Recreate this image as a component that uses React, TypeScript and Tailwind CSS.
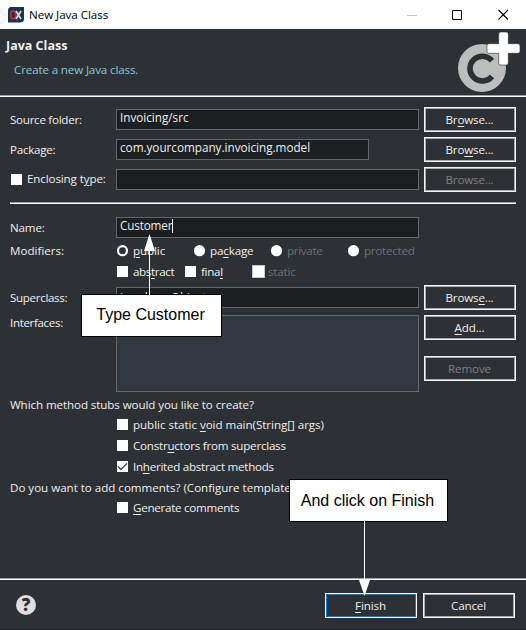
import React from 'react';

type Box = { className?: string; children?: React.ReactNode };

function Label({ className = '', children }: Box) {
  return <span className={`block whitespace-pre leading-[16px] ${className}`}>{children}</span>;
}

function Key({ children }: Box) {
  return <span className="underline decoration-1 underline-offset-2">{children}</span>;
}

function Field({ className = '', children }: Box) {
  return (
    <div className={`h-[21px] shrink-0 border border-[#656565] bg-[#1b1f22] pl-[3px] text-[11.7px] leading-[14px] whitespace-pre ${className}`}>
      {children}
    </div>
  );
}

function Button({ className = '', children }: Box) {
  return (
    <button className={`block h-[25px] w-[92px] shrink-0 border border-[#f4f4f4] bg-[#adadad] p-px tracking-[-0.15px] ${className}`}>
      <span className="flex h-full items-center justify-center bg-[#2d3135] pr-px whitespace-pre">
        <span className="leading-[16px]">{children}</span>
      </span>
    </button>
  );
}

function Check({ checked = false, children, className = '', text = '' }: Box & { checked?: boolean; text?: string }) {
  return (
    <div className={`flex h-[21px] items-center ${className}`}>
      <span className="block h-[11px] w-[11px] bg-white">
        {checked && (
          <svg viewBox="0 0 11 11" className="h-[11px] w-[11px]">
            <path d="M1 5.5 4 8.5 10 2.3" fill="none" stroke="#2d3135" strokeWidth="1.2" />
          </svg>
        )}
      </span>
      <Label className={`ml-[5px] ${text}`}>{children}</Label>
    </div>
  );
}

function Radio({ selected = false, children, className = '', text = '' }: Box & { selected?: boolean; text?: string }) {
  return (
    <div className={`flex h-[21px] items-center ${className}`}>
      <svg viewBox="0 0 12 12" className="h-[12px] w-[12px]">
        <circle cx="5.5" cy="5.7" r="5.6" fill="#fff" />
        {selected && <circle cx="5.5" cy="5.7" r="3.4" fill="#2d3135" />}
      </svg>
      <Label className={`ml-[4px] ${text}`}>{children}</Label>
    </div>
  );
}

function Rule({ className = '' }: Box) {
  return <div className={`h-[2px] shrink-0 border-t border-[#a0a0a0] bg-white ${className}`} />;
}

export default function App() {
  return (
    <div className="relative flex h-[630px] w-[526px] flex-col overflow-hidden bg-[#2d3135] font-['Open_Sans','Noto_Sans',sans-serif] text-[11.6px] text-[#eeeeee]">
      <div className="flex h-[29px] shrink-0 items-center bg-white text-black">
        <svg viewBox="0 0 16 16" className="ml-[8px] h-[16px] w-[16px]">
          <path d="M3 0H16V12Q16 15.5 12 15.5H0V4Q0 0 3 0Z" fill="#12394b" />
          <ellipse cx="5.3" cy="8" rx="2.6" ry="3.8" fill="none" stroke="#e01e35" strokeWidth="1.7" />
          <path d="M8 4 13 12M13 4 8 12" stroke="#d7dcdc" strokeWidth="1.7" />
        </svg>
        <Label className="ml-[5px] tracking-[-0.04px]">New Java Class</Label>
        <svg viewBox="0 0 110 12" className="ml-auto mr-[14px] h-[12px] w-[110px]">
          <path d="M5 6.5H15" stroke="#c6c6c6" />
          <path d="M50.5 1.5H59.5V10.5H50.5Z" fill="none" stroke="#000" />
          <path d="M96.5 1 106 10.5M106 1 96.5 10.5" stroke="#000" strokeWidth="1.1" />
        </svg>
      </div>

      <div className="flex h-[66px] shrink-0 justify-between">
        <div className="pl-[6px] pt-[9px]">
          <Label className="text-[12.5px] font-bold">Java Class</Label>
          <Label className="ml-[8px] mt-[8px] tracking-[-0.14px] text-[#8ac6d6]">Create a new Java class.</Label>
        </div>
        <svg viewBox="0 0 66 66" className="mr-[4px] h-[66px] w-[66px]">
          <circle cx="26" cy="39" r="24" fill="#bdbdbd" />
          <path d="M36 31.8A12.4 12.4 0 1 0 36 47.4" fill="none" stroke="#2d3135" strokeWidth="5.6" />
          <path
            d="M44.7 3h5.6q2 0 2 2v9.700h9.700q2 0 2 2v5.600q0 2-2 2h-9.700v9.700q0 2-2 2h-5.600q-2 0-2-2v-9.700h-9.700q-2 0-2-2v-5.600q0-2 2-2h9.700v-9.700q0-2 2-2Z"
            fill="#fff"
            stroke="#2d3135"
            strokeWidth=".6"
          />
        </svg>
      </div>
      <Rule />

      <div className="flex h-[105px] shrink-0 flex-col gap-[5px] pl-[10px] pt-[10px]">
        <div className="flex h-[25px] items-center">
          <Label className="w-[106px] tracking-[-0.27px]">Source folder:</Label>
          <Field className="w-[303px]">Invoicing/src</Field>
          <Button className="ml-[5px]">Br<Key>o</Key>wse...</Button>
        </div>
        <div className="flex h-[25px] items-center">
          <Label className="w-[106px] tracking-[-0.25px]">Package:</Label>
          <Field className="w-[253px]">com.yourcompany.invoicing.model</Field>
          <Button className="ml-[55px]">Bro<Key>w</Key>se...</Button>
        </div>
        <div className="flex h-[25px] items-center pb-px">
          <Check className="w-[106px] pl-px" text="tracking-[-0.12px] -ml-px">Enclosing t<Key>y</Key>pe:</Check>
          <Field className="mt-px w-[303px]" />
          <Button className="mt-px ml-[5px] text-[#7f7f7f]">Browse...</Button>
        </div>
      </div>
      <Rule className="mx-[10px]" />

      <div className="shrink-0 pl-[10px] pt-[13px]">
        <div className="flex h-[21px] items-center">
          <Label className="w-[106px] tracking-[-0.15px]">Name:</Label>
          <Field className="flex w-[303px] tracking-[-0.15px]">
            Customer<span className="mt-px h-[14px] w-px bg-white" />
          </Field>
        </div>
        <div className="mt-[2px] flex h-[21px] items-center">
          <Label className="w-[107px]">Modifiers:</Label>
          <Radio selected className="w-[77px]" text="tracking-[-0.1px]"><Key>p</Key>ublic</Radio>
          <Radio className="w-[77px]" text="tracking-[-0.14px]">pa<Key>c</Key>kage</Radio>
          <Radio className="w-[77px]" text="text-[#6e7072] tracking-[-0.3px]">private</Radio>
          <Radio text="text-[#6e7072] tracking-[-0.25px]">protected</Radio>
        </div>
        <div className="flex h-[21px] items-center pl-[107px]">
          <Check className="w-[68px]" text="-ml-px tracking-[-0.35px]">abs<Key>t</Key>ract</Check>
          <Check className="w-[67px]" text="tracking-[-0.3px]">fina<Key>l</Key></Check>
          <span className="h-[13px] w-[13px] border border-[#c8c8c8] bg-white" />
          <Label className="ml-[3px] tracking-[-0.2px] text-[#6e7072]">static</Label>
        </div>
        <div className="mt-[3px] flex h-[25px] items-center">
          <Label className="w-[106px] tracking-[-0.33px]">Superclass:</Label>
          <Field className="w-[303px] pt-[2px]">java.lang.Object</Field>
          <Button className="ml-[5px]">Brows<Key>e</Key>...</Button>
        </div>
        <div className="mt-[5px] flex h-[77px]">
          <Label className="w-[106px] tracking-[-0.35px]">Interfaces:</Label>
          <div className="w-[303px] border border-[#656565] bg-[#31383f]" />
          <div className="ml-[5px] flex flex-col gap-[16px]">
            <Button><Key>A</Key>dd...</Button>
            <Button className="text-[#7f7f7f]">Remove</Button>
          </div>
        </div>
        <Label className="mt-[5px] tracking-[-0.09px]">Which method stubs would you like to create?</Label>
        <div className="mt-px pl-[107px]">
          <Check text="-ml-px tracking-[-0.04px]">public static <Key>v</Key>oid main(String[] args)</Check>
          <Check text="-ml-px tracking-[-0.23px]">Constr<Key>u</Key>ctors from superclass</Check>
          <Check checked text="-ml-px tracking-[-0.26px]">In<Key>h</Key>erited abstract methods</Check>
        </div>
        <Label className="mt-[3px] tracking-[-0.02px]">Do you want to add comments? (Configure template</Label>
        <Check className="mt-px pl-[107px]" text="-ml-px tracking-[-0.26px]"><Key>G</Key>enerate comments</Check>
      </div>

      <div className="mt-auto h-[52px] shrink-0 border-b border-[#202326]">
        <Rule />
        <div className="flex pl-[16px] pt-[13px]">
          <span className="mt-[2px] flex h-[20px] w-[20px] items-center justify-center rounded-full bg-[#dedede] text-[17px] font-extrabold text-[#2d3135]">?</span>
          <button className="ml-[289px] h-[25px] w-[92px] border border-white bg-[#0078d7] p-px tracking-[-0.1px]">
            <span className="flex h-full items-center justify-center bg-[#2d3135] pr-px"><span><Key>F</Key>inish</span></span>
          </button>
          <Button className="ml-[6px]">Cancel</Button>
        </div>
      </div>

      <div className="absolute left-[81px] top-[294px] flex h-[43px] w-[141px] items-center justify-center border border-black bg-white pb-[2px] pr-[2px] font-['Liberation_Sans',Arial,sans-serif] text-[16px] whitespace-pre text-black">
        Type Customer
      </div>
      <div className="absolute left-[289px] top-[479px] flex h-[43px] w-[159px] items-center justify-center border border-black bg-white pr-[2px] font-['Liberation_Sans',Arial,sans-serif] text-[16px] whitespace-pre text-black">
        And click on Finish
      </div>
      <svg viewBox="0 0 12 61" className="absolute left-[143px] top-[234px] h-[61px] w-[12px]">
        <path d="M6.5 10V61" stroke="#fff" />
        <path d="M6.5 0 12 17H1Z" fill="#fff" />
      </svg>
      <svg viewBox="0 0 12 76" className="absolute left-[358px] top-[521px] h-[76px] w-[12px]">
        <path d="M6.5 0V65" stroke="#fff" />
        <path d="M6.5 75 12 59H1Z" fill="#fff" />
      </svg>
    </div>
  );
}
